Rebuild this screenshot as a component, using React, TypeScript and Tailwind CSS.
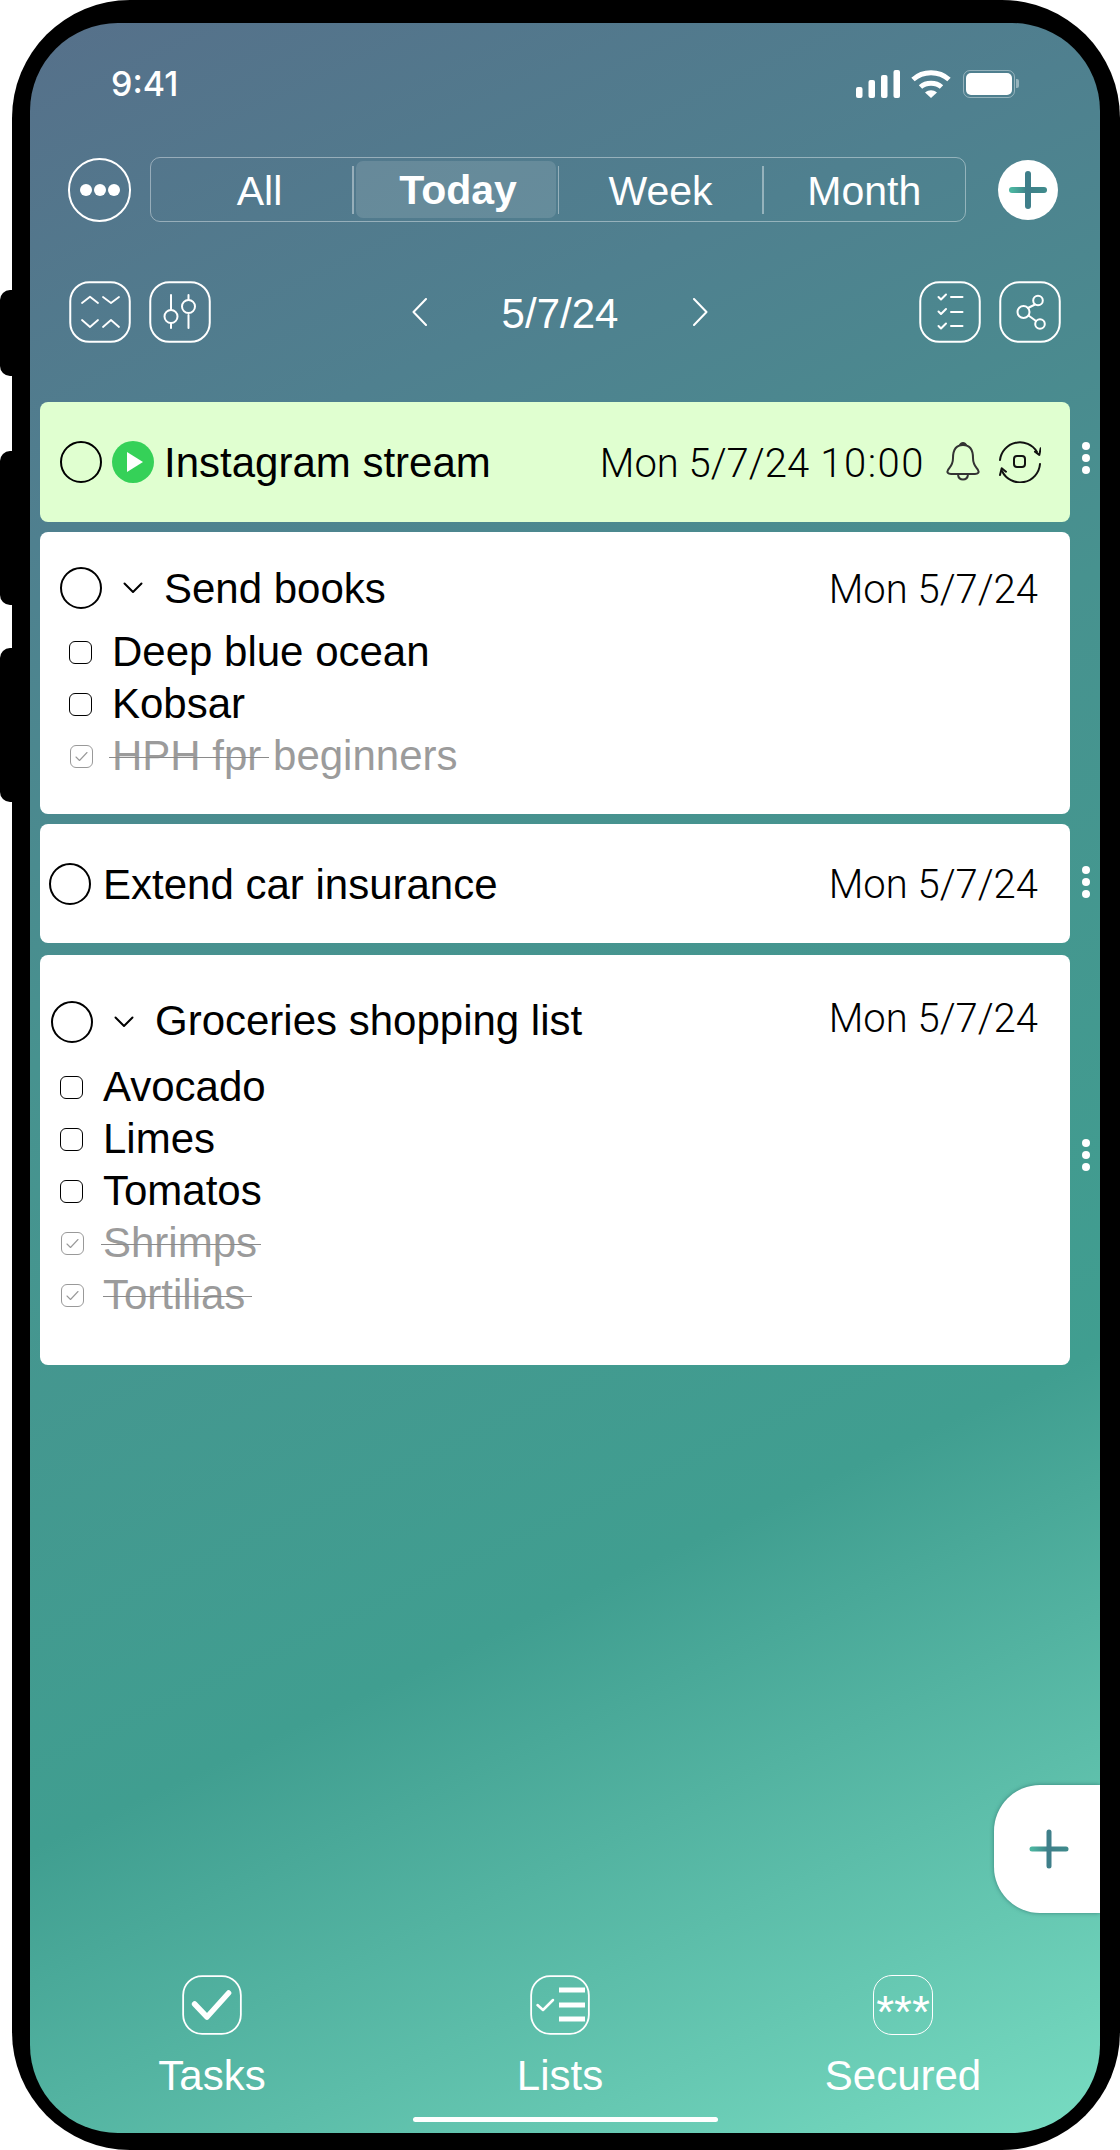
import React from "react";

const sans = "font-['Liberation_Sans',Arial,sans-serif]";
const light = "font-['Roboto',sans-serif] font-light";

function Squircle({ children, size = 62, sw = 2 }: { children?: React.ReactNode; size?: number; sw?: number }) {
  return (
    <svg width={size} height={size} viewBox={`0 0 ${size} ${size}`} fill="none" stroke="#fff" strokeLinecap="round" strokeLinejoin="round" className="block shrink-0">
      <rect x={sw / 2 + 0.25} y={sw / 2 + 0.25} width={size - sw - 0.5} height={size - sw - 0.5} rx={19} strokeWidth={sw} />
      {children}
    </svg>
  );
}

function PlusIcon({ size, arm, sw, id }: { size: number; arm: number; sw: number; id: string }) {
  const c = size / 2;
  return (
    <svg width={size} height={size} viewBox={`0 0 ${size} ${size}`} fill="none" strokeLinecap="round" className="block">
      <defs>
        <linearGradient id={id} gradientUnits="userSpaceOnUse" x1={c - arm} y1={c} x2={c + arm} y2={c}>
          <stop offset="0" stopColor="#4bb5a0" />
          <stop offset="0.5" stopColor="#3f7f88" />
          <stop offset="1" stopColor="#3f8a8c" />
        </linearGradient>
      </defs>
      <line x1={c - arm} y1={c} x2={c + arm} y2={c} stroke={`url(#${id})`} strokeWidth={sw} />
      <line x1={c} y1={c - arm} x2={c} y2={c + arm} stroke="#3f7f8a" strokeWidth={sw} />
    </svg>
  );
}

function Radio({ className = "" }: { className?: string }) {
  return <div className={`w-[42px] h-[42px] rounded-full border-2 border-black shrink-0 ${className}`} />;
}

function Chevron() {
  return (
    <svg width="20" height="12" viewBox="0 0 20 12" fill="none" stroke="#000" strokeWidth="2" strokeLinecap="round" strokeLinejoin="round" className="block shrink-0">
      <path d="M1.5 1.5 L10 10 L18.5 1.5" />
    </svg>
  );
}

function Box({ done }: { done?: boolean }) {
  if (done) {
    return (
      <div className="w-[23px] h-[23px] rounded-[6px] border border-[#999] shrink-0 flex items-center justify-center ml-[1px]">
        <svg width="15" height="13" viewBox="0 0 15 13" fill="none" stroke="#999" strokeWidth="1.1" strokeLinecap="round" strokeLinejoin="round" className="block">
          <path d="M2 7 L5.5 10.5 L13 2.5" />
        </svg>
      </div>
    );
  }
  return <div className="w-[23px] h-[23px] rounded-[6px] border-[1.5px] border-black shrink-0" />;
}

function Item({ text, done, strike, gap = 19 }: { text: string; done?: boolean; strike?: number[]; gap?: number }) {
  return (
    <div className="flex items-center h-[52px]">
      <div className="w-[24px] shrink-0 flex">
        <Box done={done} />
      </div>
      <div className={`relative text-[42px] leading-[52px] whitespace-nowrap ${done ? "text-[#9b9b9b]" : "text-black"}`} style={{ marginLeft: gap }}>
        {text}
        {strike && (
          <div className="absolute h-[1px] bg-[#8a8a8a] top-[27px]" style={{ left: strike[0], width: strike[1] }} />
        )}
      </div>
    </div>
  );
}

function Dots({ className }: { className: string }) {
  return (
    <div className={`absolute flex flex-col gap-[4px] ${className}`}>
      <div className="w-[8px] h-[8px] rounded-full bg-white" />
      <div className="w-[8px] h-[8px] rounded-full bg-white" />
      <div className="w-[8px] h-[8px] rounded-full bg-white" />
    </div>
  );
}

function Date({ text = "Mon 5/7/24", time, className = "" }: { text?: string; time?: string; className?: string }) {
  return (
    <div className={`${light} pt-[3px] text-[40px] leading-[52px] text-black whitespace-nowrap ${className}`}>
      {text}
      {time && <span className="tracking-[1.5px]"> {time}</span>}
    </div>
  );
}

function Tab({ icon, label, className }: { icon: React.ReactNode; label: string; className: string }) {
  return (
    <div className={`w-[200px] flex flex-col items-center ${className}`}>
      {icon}
      <div className="mt-[17px] text-[42px] leading-[48px] text-white">{label}</div>
    </div>
  );
}

export default function App() {
  return (
    <div className={`relative w-[1120px] h-[2150px] bg-white overflow-hidden ${sans}`}>
      <div className="absolute left-0 top-[290px] w-[20px] h-[86px] rounded-l-[10px] bg-black" />
      <div className="absolute left-0 top-[451px] w-[20px] h-[154px] rounded-l-[10px] bg-black" />
      <div className="absolute left-0 top-[648px] w-[20px] h-[154px] rounded-l-[10px] bg-black" />

      <div className="relative ml-[12px] w-[1108px] h-[2150px] bg-black rounded-[118px] pl-[18px] pr-[20px] pt-[23px] pb-[17px]">
        <div className="relative h-full rounded-[88px] overflow-hidden flex flex-col bg-[linear-gradient(155deg,#56708a_0%,#4f808f_20%,#47928f_40%,#409e90_70%,#78dcc2_100%)]">
          {/* status bar */}
          <div className="mt-[47px] h-[28px] pl-[81px] pr-[85px] flex items-center justify-between">
            <div className="font-['Inter',sans-serif] font-medium text-[34px] leading-[28px] text-white">9:41</div>
            <div className="flex items-center">
              <svg width="44" height="28" viewBox="0 0 44 28" fill="#fff" className="block">
                <rect x="0" y="17" width="6.5" height="11" rx="2" />
                <rect x="12.5" y="10" width="6.5" height="18" rx="2" />
                <rect x="25" y="5" width="6.5" height="23" rx="2" />
                <rect x="37.5" y="0" width="6.5" height="28" rx="2" />
              </svg>
              <svg width="40" height="28" viewBox="0 0 40 28" fill="none" stroke="#fff" strokeWidth="5" className="block ml-[11px]">
                <path d="M2 9.5 C12 0.5 28 0.5 38 9.5" />
                <path d="M9.5 17 C15 12 25 12 30.5 17" />
                <path d="M14 22.5 C18 19.5 22 19.5 26 22.5 L20 28 Z" fill="#fff" stroke="none" />
              </svg>
              <div className="relative ml-[12px] w-[52px] h-[28px] rounded-[7px] border-[1.5px] border-white/40 p-[2px]">
                <div className="w-full h-full rounded-[5px] bg-white" />
                <div className="absolute right-[-5px] top-[8px] w-[3px] h-[9px] rounded-r-[2px] bg-white/40" />
              </div>
            </div>
          </div>

          {/* segmented row */}
          <div className="mt-[59px] h-[65px] pl-[38px] flex items-center">
            <div className="relative w-[63px] h-[64px] rounded-full border-2 border-white flex items-center justify-center gap-[2px] shrink-0">
              <div className="w-[12px] h-[12px] rounded-full bg-white" />
              <div className="w-[12px] h-[12px] rounded-full bg-white" />
              <div className="w-[12px] h-[12px] rounded-full bg-white" />
            </div>
            <div className="ml-[19px] w-[816px] h-[65px] rounded-[10px] border-[1.5px] border-white/40 flex items-center text-white text-[41px] shrink-0">
              <div className="w-[201px] pl-[16px] pt-[3px] text-center leading-[48px]">All</div>
              <div className="w-[1.5px] h-[48px] bg-white/40 shrink-0" />
              <div className="w-[204px] h-[57px] px-[2px] shrink-0">
                <div className="h-full rounded-[7px] bg-white/12 flex items-center justify-center font-bold pt-[3px] pl-[5px]">Today</div>
              </div>
              <div className="w-[1.5px] h-[48px] bg-white/40 shrink-0" />
              <div className="w-[203px] pt-[3px] text-center leading-[48px]">Week</div>
              <div className="w-[1.5px] h-[48px] bg-white/40 shrink-0" />
              <div className="flex-1 pt-[3px] text-center leading-[48px]">Month</div>
            </div>
            <div className="ml-[32px] w-[60px] h-[60px] rounded-full bg-white flex items-center justify-center shrink-0">
              <PlusIcon size={60} arm={16} sw={6} id="plusA" />
            </div>
          </div>

          {/* tools row */}
          <div className="mt-[59px] h-[62px] pl-[39px] flex items-center">
            <div className="flex gap-[18px]">
              <Squircle>
                <g strokeWidth="1.8">
                  <path d="M13 22 L21 15.7 L29 22" />
                  <path d="M34 16 L42 22 L50 16" />
                  <path d="M13 39 L21 46 L29 39" />
                  <path d="M34 46 L42 39 L50 46" />
                </g>
              </Squircle>
              <Squircle>
                <g strokeWidth="2">
                  <path d="M22 14 V29" />
                  <circle cx="22" cy="35.5" r="6.5" />
                  <path d="M22 42 V47" />
                  <path d="M39.5 14 V19" />
                  <circle cx="39.5" cy="25.5" r="6.5" />
                  <path d="M39.5 34 V47" />
                </g>
              </Squircle>
            </div>
            <div className="ml-[201px] w-[296px] flex items-center justify-between text-white">
              <svg width="15" height="28" viewBox="0 0 15 28" fill="none" stroke="#fff" strokeWidth="2" strokeLinecap="round" strokeLinejoin="round" className="block">
                <path d="M14 1 L1.5 14 L14 27" />
              </svg>
              <div className="text-[42px] leading-[48px] pt-[3px]">5/7/24</div>
              <svg width="15" height="28" viewBox="0 0 15 28" fill="none" stroke="#fff" strokeWidth="2" strokeLinecap="round" strokeLinejoin="round" className="block">
                <path d="M1 1 L13.5 14 L1 27" />
              </svg>
            </div>
            <div className="ml-[211px] flex gap-[18px]">
              <Squircle>
                <g strokeWidth="2">
                  <path d="M19.5 16 L22 18.5 L27 13.5" />
                  <path d="M19.5 30.5 L22 33 L27 28" />
                  <path d="M19.5 45 L22 47.5 L27 42.5" />
                  <path d="M32 16 H43.5" />
                  <path d="M32 31 H43.5" />
                  <path d="M32 45 H43.5" />
                </g>
              </Squircle>
              <Squircle>
                <g strokeWidth="2">
                  <circle cx="39" cy="19.5" r="4.8" />
                  <circle cx="24.5" cy="31" r="6" />
                  <circle cx="41" cy="43" r="4.8" />
                  <path d="M36 23.5 L29 27" />
                  <path d="M29.5 34.5 L37 40" />
                </g>
              </Squircle>
            </div>
          </div>

          {/* task cards */}
          <div className="mt-[59px] pl-[10px] pr-[30px] flex flex-col relative">
            <div className="h-[120px] rounded-[8px] bg-[#e0ffd0] flex items-center pl-[20px] pr-[29px]">
              <Radio />
              <div className="ml-[10px] w-[42px] h-[42px] rounded-full bg-[#35d158] flex items-center justify-center shrink-0">
                <svg width="18" height="22" viewBox="0 0 18 22" fill="#fff" className="block ml-[3px]"><path d="M1 1 L17 11 L1 21 Z" /></svg>
              </div>
              <div className="ml-[10px] pt-[1px] text-[42px] leading-[52px] text-black whitespace-nowrap">Instagram stream</div>
              <Date text="Mon 5/7/24" time="10:00" className="ml-auto" />
              <svg width="36" height="42" viewBox="0 0 36 42" fill="none" stroke="#333" strokeWidth="2" strokeLinejoin="round" className="block ml-[20px] shrink-0">
                <path d="M18 4 C10 4 8 10 8 17 C8 24 5 26 3 29 C1.5 31.5 3 33 6 33 H30 C33 33 34.5 31.5 33 29 C31 26 28 24 28 17 C28 10 26 4 18 4 Z" />
                <path d="M13 34 C14 40 22 40 23 34" />
                <path d="M13.5 5 C15 -0.5 21 -0.5 22.5 5 Z" fill="#333" stroke="none" />
              </svg>
              <svg width="42" height="42" viewBox="0 0 42 42" fill="none" stroke="#111" strokeWidth="2" strokeLinecap="round" strokeLinejoin="round" className="block ml-[18px] shrink-0">
                <path d="M1 19 A20 20 0 0 1 38 11" />
                <path d="M36 10.7 L40.3 14 L41.7 7.3" />
                <path d="M41 23 A20 20 0 0 1 3 30" />
                <path d="M1 34 L2.7 27.3 L7 30.7" />
                <rect x="15" y="15" width="11" height="11" rx="3" />
              </svg>
            </div>

            <div className="mt-[10px] h-[282px] rounded-[8px] bg-white pt-[30px] pl-[20px] pr-[32px] flex flex-col">
              <div className="h-[52px] flex items-center">
                <Radio />
                <div className="ml-[21px] w-[20px]"><Chevron /></div>
                <div className="ml-[21px] pt-[1px] text-[42px] leading-[52px] text-black whitespace-nowrap">Send books</div>
                <Date className="ml-auto" />
              </div>
              <div className="mt-[12px] pl-[9px]">
                <Item text="Deep blue ocean" />
                <Item text="Kobsar" />
                <Item text="HPH fpr beginners" done strike={[-3, 160]} />
              </div>
            </div>

            <div className="mt-[10px] h-[119px] rounded-[8px] bg-white flex items-center pl-[9px] pr-[32px]">
              <Radio />
              <div className="ml-[12px] pt-[3px] text-[42px] leading-[52px] text-black whitespace-nowrap">Extend car insurance</div>
              <Date className="ml-auto" />
            </div>

            <div className="mt-[12px] h-[410px] rounded-[8px] bg-white pt-[41px] pl-[11px] pr-[32px] flex flex-col">
              <div className="h-[52px] flex items-center">
                <Radio />
                <div className="ml-[21px] w-[20px]"><Chevron /></div>
                <div className="ml-[21px] pt-[3px] text-[42px] leading-[52px] text-black whitespace-nowrap -mt-[5px]">Groceries shopping list</div>
                <Date className="ml-auto -mt-[10px]" />
              </div>
              <div className="mt-[13px] pl-[9px]">
                <Item text="Avocado" />
                <Item text="Limes" />
                <Item text="Tomatos" />
                <Item text="Shrimps" done strike={[-2, 160]} />
                <Item text="Tortilias" done strike={[0, 149]} />
              </div>
            </div>

            <Dots className="left-[1052px] top-[40px]" />
            <Dots className="left-[1052px] top-[464px]" />
            <Dots className="left-[1052px] top-[737px]" />
          </div>

          {/* tab bar */}
          <div className="mt-auto pl-[82px] flex">
            <Tab
              label="Tasks"
              className=""
              icon={
                <Squircle size={60} sw={1.8}>
                  <path d="M12.6 29 L25 42 L46.6 18" strokeWidth="5.5" />
                </Squircle>
              }
            />
            <Tab
              label="Lists"
              className="ml-[148px]"
              icon={
                <Squircle size={60} sw={1.8}>
                  <path d="M7.5 30 L13 35 L23 25" strokeWidth="2.5" />
                  <g strokeWidth="5" strokeLinecap="butt">
                    <path d="M29 15 H55" />
                    <path d="M29 30 H55" />
                    <path d="M29 44 H55" />
                  </g>
                </Squircle>
              }
            />
            <Tab
              label="Secured"
              className="ml-[143px]"
              icon={
                <div className="w-[60px] h-[60px] rounded-[19px] border-[1.8px] border-white flex justify-center shrink-0">
                  <span className="text-[46px] leading-[44px] text-white mt-[14px]">***</span>
                </div>
              }
            />
          </div>
          <div className="mt-[17px] mb-[11px] self-center w-[305px] h-[5px] rounded-full bg-white" />

          {/* floating add */}
          <div className="absolute right-0 top-[1762px] w-[106px] h-[128px] rounded-l-[46px] bg-white shadow-[0_0_4px_rgba(30,90,90,0.6)] flex items-center pl-[31px]">
            <PlusIcon size={48} arm={17} sw={5} id="plusB" />
          </div>
        </div>
      </div>
    </div>
  );
}
